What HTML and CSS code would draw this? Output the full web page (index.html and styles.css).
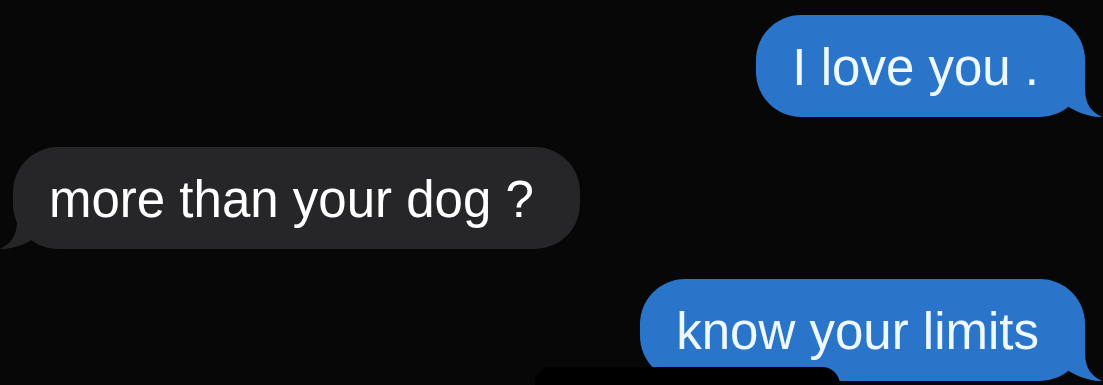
FILE: index.html
```html
<!DOCTYPE html>
<html lang="en">
<head>
<meta charset="utf-8">
<title>Messages</title>
<link rel="stylesheet" href="styles.css">
</head>
<body>
<div class="thread">
  <div class="msg sent">
    <span class="text">I love you .</span>
    <svg class="tail" width="58" height="50" viewBox="0 0 58 50"><path d="M10 2 L40 2 L40 22 C40 37 47 46 57.5 50 C47 50.5 33 46 22 39 L10 30 Z"/></svg>
  </div>
  <div class="msg received">
    <span class="text">more than your dog ?</span>
    <svg class="tail" width="58" height="50" viewBox="0 0 58 50"><path d="M10 2 L40 2 L40 22 C40 37 47 46 57.5 50 C47 50.5 33 46 22 39 L10 30 Z"/></svg>
  </div>
  <div class="msg sent">
    <span class="text">know your limits</span>
    <svg class="tail" width="58" height="50" viewBox="0 0 58 50"><path d="M10 2 L40 2 L40 22 C40 37 47 46 57.5 50 C47 50.5 33 46 22 39 L10 30 Z"/></svg>
  </div>
  <div class="redacted"></div>
</div>
</body>
</html>
```
FILE: styles.css
```css
html, body {
  margin: 0;
  padding: 0;
  background: #070707;
  height: 100%;
  overflow: hidden;
}

.thread {
  position: relative;
  display: flex;
  flex-direction: column;
  gap: 30px;
  padding: 15px 18px 0 13px;
  font-family: "Liberation Sans", Arial, sans-serif;
  font-size: 51px;
  line-height: 60px;
}

.msg {
  position: relative;
  padding: 23px 46px 19px 36px;
  border-radius: 45px;
  white-space: nowrap;
}

.msg .text {
  position: relative;
  z-index: 1;
}

.sent {
  align-self: flex-end;
  background: #2a74c9;
  color: #eef8ff;
}

.received {
  align-self: flex-start;
  background: #262628;
  color: #ffffff;
}

.tail {
  position: absolute;
  bottom: 0;
  display: block;
}

.sent .tail {
  right: -18px;
  fill: #2a74c9;
}

.received .tail {
  left: -14px;
  fill: #262628;
  transform: scaleX(-1);
}

.redacted {
  position: absolute;
  left: 535px;
  top: 367px;
  width: 305px;
  height: 18px;
  background: #000;
  border-radius: 22px 26px 0 0;
}
```
